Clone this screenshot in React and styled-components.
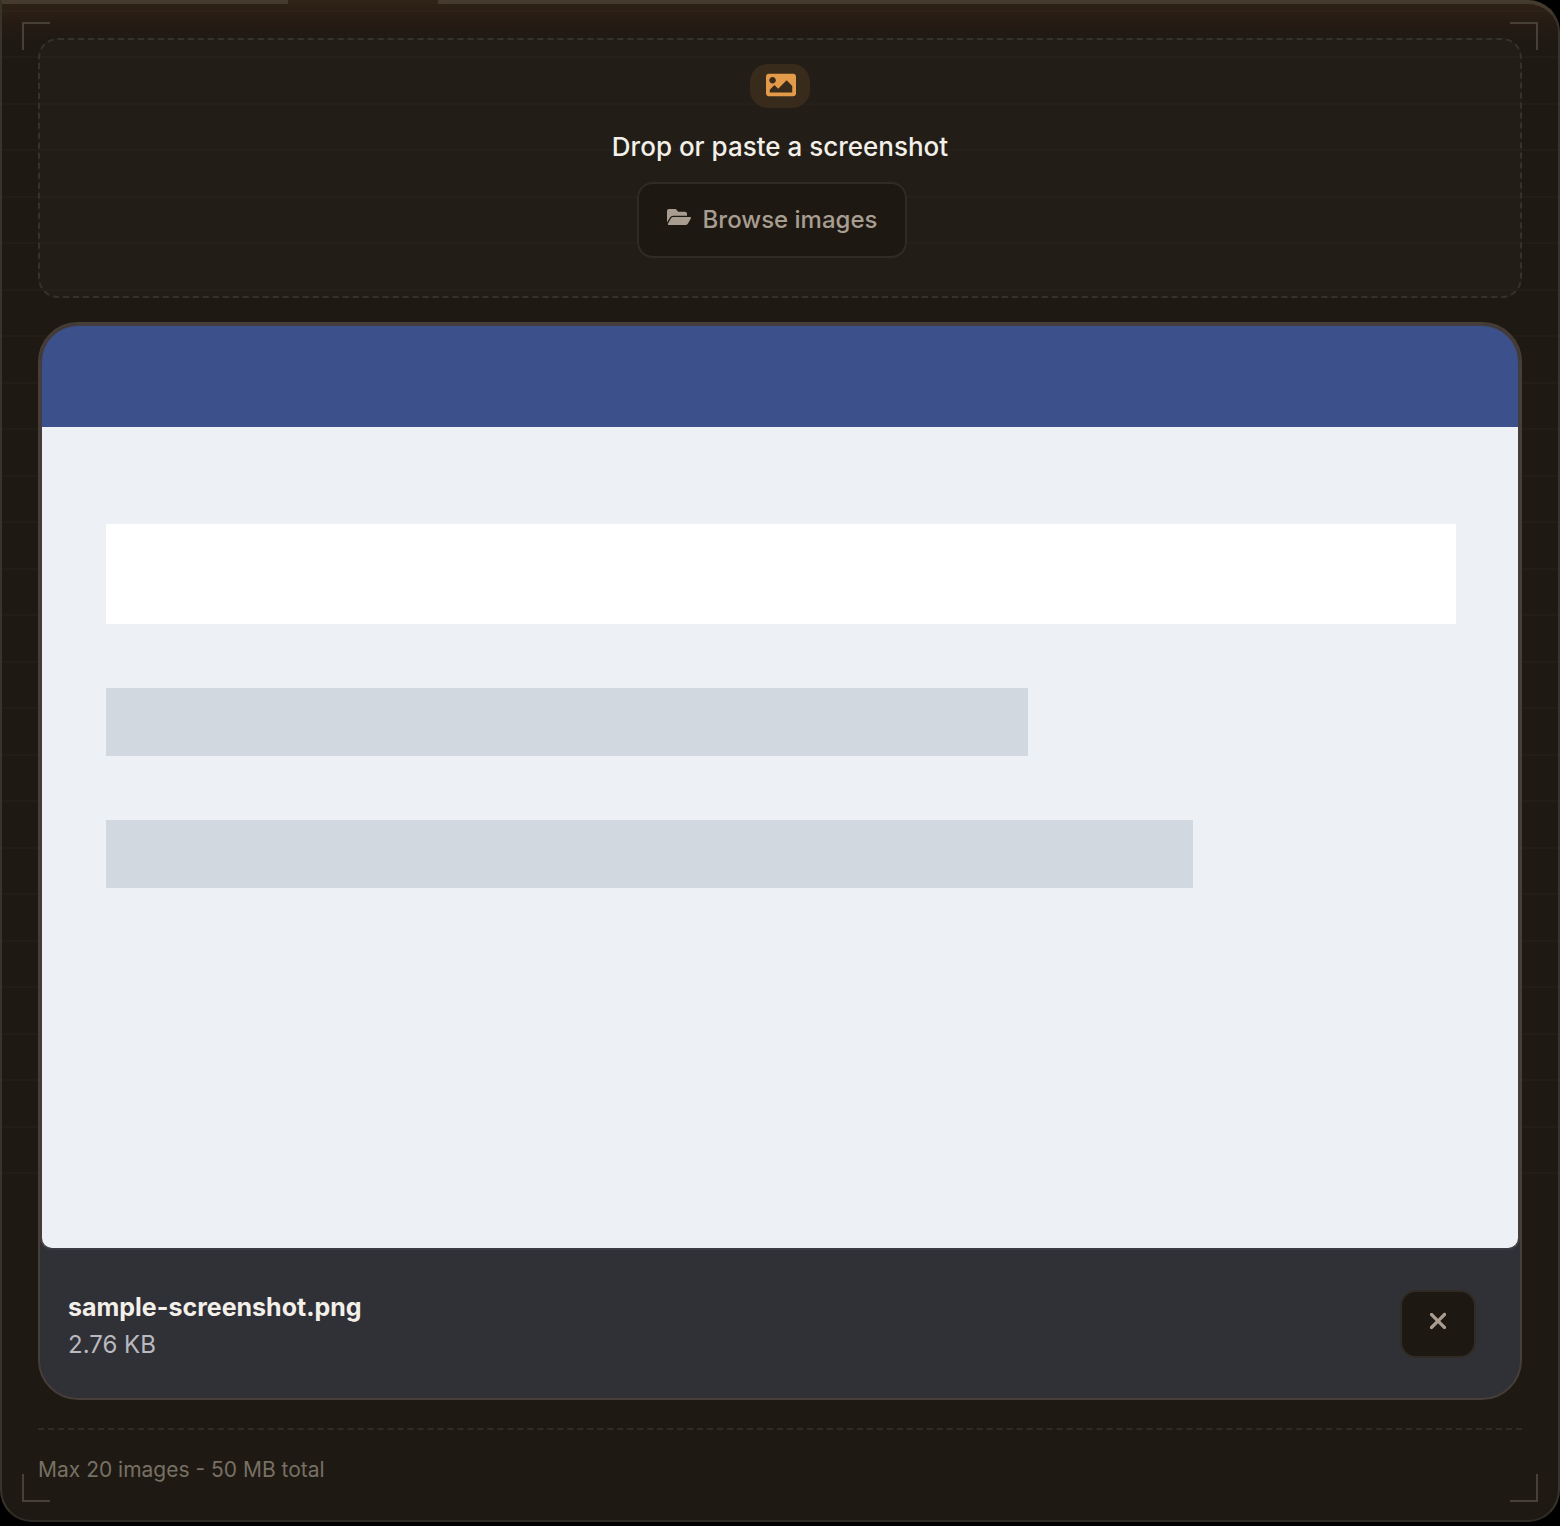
import React, { useState } from "react";
import styled, { createGlobalStyle, css } from "styled-components";
import { FaImage, FaFolderOpen } from "react-icons/fa";
import { FaXmark } from "react-icons/fa6";

const GlobalStyle = createGlobalStyle`
  *, *::before, *::after { box-sizing: border-box; }
  body {
    margin: 0;
    background: #000;
    color: #f3efe9;
    font-family: Inter, "Open Sans", sans-serif;
  }
`;

const Panel = styled.main`
  position: relative;
  display: flex;
  flex-direction: column;
  gap: 24px;
  padding: 34px 36px 36px;
  border: 2px solid #38332b;
  border-top: 4px solid #453a2e;
  border-bottom-color: #2e2a24;
  border-radius: 0 32px 32px 32px;
  background:
    repeating-linear-gradient(
      transparent 0 6px,
      rgba(255, 240, 210, 0.02) 6px 8px,
      transparent 8px 52px,
      rgba(255, 240, 210, 0.02) 52px 54px,
      transparent 54px 93px
    ) 0 0 / 100% 1180px no-repeat,
    linear-gradient(#2d2116 0, #261b13 20px, #1e1a13 36px, #1e1a13 100%);
`;

const TabGap = styled.span`
  position: absolute;
  top: -4px;
  left: 286px;
  width: 150px;
  height: 4px;
  background: #2f2217;
`;

const Corner = styled.span`
  position: absolute;
  width: 28px;
  height: 28px;
  border: 0 solid #464037;
  ${({ $v }) => ($v === "top"
    ? css`top: 18px; border-top-width: 2px;`
    : css`bottom: 18px; border-bottom-width: 2px;`)}
  ${({ $h }) => ($h === "left"
    ? css`left: 20px; border-left-width: 2px;`
    : css`right: 20px; border-right-width: 2px;`)}
`;

const DropZone = styled.section`
  display: flex;
  flex-direction: column;
  align-items: center;
  padding: 24px 24px 38px;
  border: 2px dashed #35322b;
  border-radius: 20px;
  background: rgba(43, 41, 31, 0.35);
`;

const IconBadge = styled.span`
  display: flex;
  align-items: center;
  justify-content: center;
  width: 60px;
  height: 44px;
  padding: 0 0 2px 2px;
  border-radius: 18px;
  background: #382b1c;
  color: #e39b4a;
`;

const Title = styled.h1`
  margin: 20px 0 16px;
  font-size: 26px;
  font-weight: 500;
  line-height: 38px;
`;

const buttonLook = css`
  display: flex;
  align-items: center;
  justify-content: center;
  border: 2px solid #302c25;
  background: #1d1912;
  color: #a89d90;
  font: inherit;
  cursor: pointer;
`;

const BrowseButton = styled.button`
  ${buttonLook}
  gap: 12px;
  height: 76px;
  margin-right: 16px;
  padding: 0 28px 2px;
  border-radius: 16px;
  font-size: 24px;
  font-weight: 500;

  svg {
    margin-bottom: 4px;
  }
`;

const RemoveButton = styled.button`
  ${buttonLook}
  width: 76px;
  height: 68px;
  padding: 0 0 6px;
  border-radius: 16px;
`;

const Card = styled.article`
  border: 2px solid #483e39;
  border-radius: 40px;
  overflow: hidden;
  background: #303037;
`;

const Preview = styled.div`
  height: 926px;
  border: 2px solid #443d3d;
  border-bottom-color: #3b3c43;
  border-radius: 38px 38px 12px 12px;
  overflow: hidden;
  background: linear-gradient(#3c518b 101px, #edf1f6 101px);
`;

const PreviewBody = styled.div`
  display: flex;
  flex-direction: column;
  gap: 64px;
  padding: 198px 62px 0 64px;
`;

const Block = styled.div`
  width: ${({ $width }) => $width};
  height: ${({ $tall }) => ($tall ? 100 : 68)}px;
  background: ${({ $tall }) => ($tall ? "#fff" : "#d1d8e0")};
`;

const CardFooter = styled.footer`
  display: flex;
  align-items: center;
  justify-content: space-between;
  height: 148px;
  padding: 0 44px 0 28px;
`;

const FileInfo = styled.div`
  display: flex;
  flex-direction: column;
  padding-top: 4px;
`;

const FileName = styled.strong`
  font-size: 25px;
  font-weight: 700;
  line-height: 38px;
`;

const FileSize = styled.span`
  color: #b9b9bf;
  font-size: 24px;
  line-height: 38px;
`;

const Limits = styled.p`
  margin: 4px 0 0;
  padding-top: 26px;
  border-top: 2px dashed #302c24;
  color: #777064;
  font-size: 21px;
  line-height: 28px;
`;

export default function App() {
  const [hasFile, setHasFile] = useState(true);
  return (
    <>
      <GlobalStyle />
      <Panel>
        <TabGap />
        <Corner $v="top" $h="left" />
        <Corner $v="top" $h="right" />
        <Corner $v="bottom" $h="left" />
        <Corner $v="bottom" $h="right" />
        <DropZone>
          <IconBadge><FaImage size={30} /></IconBadge>
          <Title>Drop or paste a screenshot</Title>
          <BrowseButton type="button">
            <FaFolderOpen size={24} />
            Browse images
          </BrowseButton>
        </DropZone>
        {hasFile && (
          <Card>
            <Preview role="img" aria-label="sample-screenshot.png">
              <PreviewBody>
                <Block $tall $width="100%" />
                <Block $width="68.3%" />
                <Block $width="80.5%" />
              </PreviewBody>
            </Preview>
            <CardFooter>
              <FileInfo>
                <FileName>sample-screenshot.png</FileName>
                <FileSize>2.76 KB</FileSize>
              </FileInfo>
              <RemoveButton type="button" aria-label="Remove image" onClick={() => setHasFile(false)}>
                <FaXmark size={26} />
              </RemoveButton>
            </CardFooter>
          </Card>
        )}
        <Limits>Max 20 images - 50 MB total</Limits>
      </Panel>
    </>
  );
}
